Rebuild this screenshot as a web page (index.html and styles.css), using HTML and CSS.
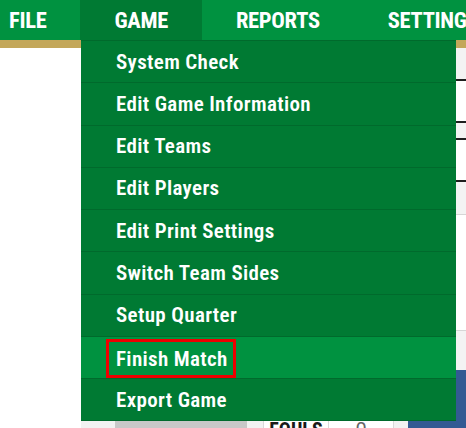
FILE: index.html
```html
<!DOCTYPE html>
<html lang="en">
<head>
<meta charset="utf-8">
<title>Game menu</title>
<link rel="stylesheet" href="styles.css">
</head>
<body>
<div class="app">
  <nav class="topnav">
    <div class="tab tab-first">FILE</div>
    <div class="tab tab-active">GAME</div>
    <div class="tab">REPORTS</div>
    <div class="tab">SETTINGS</div>
  </nav>
  <div class="gold"></div>
  <main class="board">
    <div class="board-left">
      <div class="spacer"></div>
      <div class="stat-row">
        <div class="blk blk-blank"></div>
        <div class="blk blk-light w34"></div>
        <div class="blk blk-gray"></div>
        <div class="blk blk-light w16"></div>
        <div class="blk cell cell-label">FOULS</div>
        <div class="blk cell cell-value">0</div>
        <div class="blk blk-light w14"></div>
      </div>
    </div>
    <div class="board-right">
      <div class="r r-gray h31"></div>
      <div class="r r-black"></div>
      <div class="r r-white h40"></div>
      <div class="r r-black"></div>
      <div class="r r-gray h15"></div>
      <div class="r r-black"></div>
      <div class="r r-white h40"></div>
      <div class="r r-black"></div>
      <div class="r r-gray h32"></div>
      <div class="r r-line"></div>
      <div class="r r-white h115"></div>
      <div class="r r-line"></div>
      <div class="r r-gray h39"></div>
      <div class="r r-blue"></div>
    </div>
  </main>
  <ul class="dropdown">
    <li class="item">System Check</li>
    <li class="item">Edit Game Information</li>
    <li class="item">Edit Teams</li>
    <li class="item">Edit Players</li>
    <li class="item">Edit Print Settings</li>
    <li class="item">Switch Team Sides</li>
    <li class="item">Setup Quarter</li>
    <li class="item item-hover"><span class="mark">Finish Match</span></li>
    <li class="item">Export Game</li>
  </ul>
</div>
</body>
</html>
```
FILE: styles.css
```css
* { box-sizing: border-box; }
html, body { margin: 0; padding: 0; background: #fff; }
body { width: 466px; height: 428px; overflow: hidden; font-family: Roboto, "Liberation Sans", sans-serif; }

.app { position: relative; width: 466px; height: 428px; overflow: hidden; display: flex; flex-direction: column; }

.topnav {
  display: flex;
  height: 40px;
  background: #009240;
  white-space: nowrap;
  flex: none;
}
.tab {
  display: flex;
  align-items: center;
  padding: 0 34px;
  color: #fff;
  font-weight: 700;
  font-size: 22.5px;
  font-stretch: condensed;
  letter-spacing: -0.3px;
  flex: none;
}
.tab-first { padding-left: 9px; }
.tab-active { background: #007a33; }

.gold { height: 8px; background: #c3a75a; flex: none; }

.board { flex: 1; display: flex; min-height: 0; }
.board-left { width: 408px; display: flex; flex-direction: column; }
.spacer { height: 372px; flex: none; background: #fff; }
.stat-row { display: flex; height: 40px; flex: none; }
.blk { height: 40px; }
.blk-blank { width: 81px; background: #fff; }
.blk-light { background: #f2f2f2; }
.w34 { width: 34px; }
.w16 { width: 16px; }
.w14 { width: 14px; }
.blk-gray { width: 132px; background: #c8c8c8; }
.cell {
  background: #fff;
  border-left: 1px solid #d9d9d9;
  display: flex;
  justify-content: center;
  padding-top: 0;
  font-size: 20px;
  line-height: 20px;
}
.cell-label { width: 65px; font-weight: 700; color: #1a1a1a; font-stretch: condensed; }
.cell-value { width: 66px; color: #666; border-right: 1px solid #d9d9d9; }

.board-right { width: 58px; display: flex; flex-direction: column; }
.r { flex: none; }
.r-gray { background: #f3f3f3; }
.r-white { background: #fff; }
.r-black { height: 2px; background: #1e1e1e; }
.r-line { height: 1px; background: #d6d6d6; }
.r-blue { flex: 1; background: #335a93; }
.h31 { height: 31px; }
.h40 { height: 40px; }
.h15 { height: 15px; }
.h32 { height: 32px; }
.h115 { height: 115px; }
.h39 { height: 39px; }

.dropdown {
  position: absolute;
  top: 40px;
  left: 81px;
  width: 375px;
  margin: 0;
  padding: 0;
  list-style: none;
  background: #007a33;
  border-top: 1px solid #006a2c;
}
.item {
  height: 42.25px;
  border-bottom: 1px solid #006a2c;
  display: flex;
  align-items: center;
  padding-left: 35px;
  color: #fff;
  font-weight: 600;
  font-size: 21px;
  font-stretch: condensed;
  letter-spacing: 0.35px;
  white-space: nowrap;
}
.item-hover { background: #009240; align-items: flex-end; }
.mark {
  display: flex;
  align-items: center;
  height: 39px;
  margin-left: -10px;
  padding: 0 5px 0 7px;
  border: 3px solid #ee0000;
}
```
